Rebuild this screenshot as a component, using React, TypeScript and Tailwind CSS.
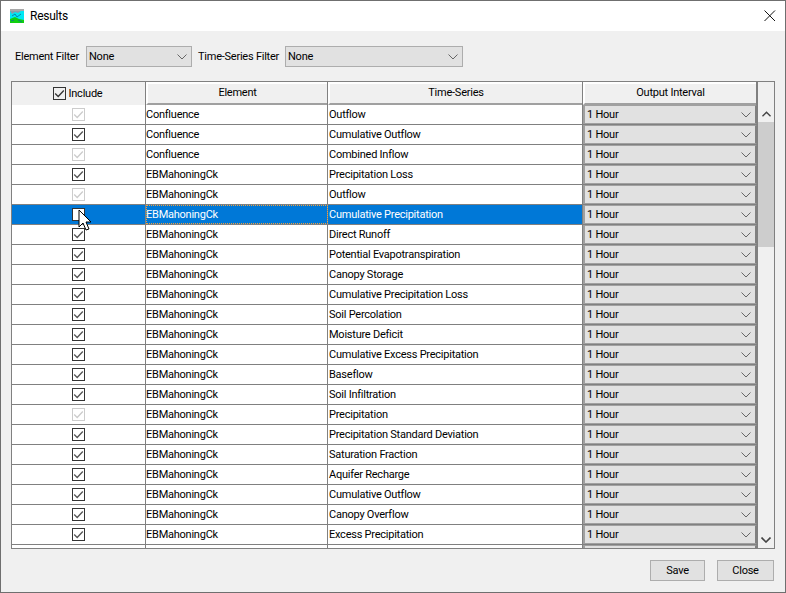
const rows: [string, string, "on" | "off" | "dim"][] = [
  ["Confluence", "Outflow", "dim"],
  ["Confluence", "Cumulative Outflow", "on"],
  ["Confluence", "Combined Inflow", "dim"],
  ["EBMahoningCk", "Precipitation Loss", "on"],
  ["EBMahoningCk", "Outflow", "dim"],
  ["EBMahoningCk", "Cumulative Precipitation", "off"],
  ["EBMahoningCk", "Direct Runoff", "on"],
  ["EBMahoningCk", "Potential Evapotranspiration", "on"],
  ["EBMahoningCk", "Canopy Storage", "on"],
  ["EBMahoningCk", "Cumulative Precipitation Loss", "on"],
  ["EBMahoningCk", "Soil Percolation", "on"],
  ["EBMahoningCk", "Moisture Deficit", "on"],
  ["EBMahoningCk", "Cumulative Excess Precipitation", "on"],
  ["EBMahoningCk", "Baseflow", "on"],
  ["EBMahoningCk", "Soil Infiltration", "on"],
  ["EBMahoningCk", "Precipitation", "dim"],
  ["EBMahoningCk", "Precipitation Standard Deviation", "on"],
  ["EBMahoningCk", "Saturation Fraction", "on"],
  ["EBMahoningCk", "Aquifer Recharge", "on"],
  ["EBMahoningCk", "Cumulative Outflow", "on"],
  ["EBMahoningCk", "Canopy Overflow", "on"],
  ["EBMahoningCk", "Excess Precipitation", "on"],
];

function Chevron({ bold }: { bold?: boolean }) {
  return (
    <svg width="10" height="6" viewBox="0 0 10 6" fill="none" stroke={bold ? "#444" : "#666"} strokeWidth={bold ? 1.6 : 1}>
      <path d="M0.5 0.5 L5 5 L9.5 0.5" />
    </svg>
  );
}

function Check({ state }: { state: "on" | "off" | "dim" }) {
  const dim = state === "dim";
  return (
    <span className={`flex h-[13px] w-[13px] items-center justify-center border ${dim ? "border-[#cccccc]" : "border-[#333333]"} ${state === "off" ? "bg-white" : ""}`}>
      {state !== "off" && (
        <svg width="11" height="11" viewBox="0 0 11 11" fill="none" stroke={dim ? "#cccccc" : "#555555"} strokeWidth="1.3">
          <path d="M1.2 5.5 L4.2 8.5 L9.8 2.5" />
        </svg>
      )}
    </span>
  );
}

function Select({ width, label }: { width: string; label: string }) {
  return (
    <div className={`flex h-[21px] items-center justify-between border border-[#adadad] bg-[#e1e1e1] pl-[2px] pr-[4px] ${width}`}>
      <span>{label}</span>
      <Chevron />
    </div>
  );
}

function HeaderCell({ width, children }: { width: string; children: string }) {
  return (
    <div className={`flex h-[23px] items-center justify-center border-r border-[#808080] ${width}`}>
      <div className="flex h-full w-full items-center justify-center border-t-2 border-l-2 border-b-2 border-t-white border-l-white border-b-[#a0a0a0] bg-[#f0f0f0] pb-[2px]">
        {children}
      </div>
    </div>
  );
}

function Row({ el, series, state, selected }: { el: string; series: string; state: "on" | "off" | "dim"; selected: boolean }) {
  return (
    <div className={`flex h-[20px] border-b border-[#808080] ${selected ? "bg-[#0078d7] text-white" : ""}`}>
      <div className="flex w-[134px] items-center justify-center border-r border-[#808080]">
        <Check state={state} />
      </div>
      <div className={`flex w-[182px] items-center border-r border-[#808080] ${selected ? "outline-1 -outline-offset-1 outline-dotted outline-[#f0a040]" : ""}`}>
        {el}
      </div>
      <div className="flex w-[255px] items-center border-r border-[#808080] pl-[1px]">{series}</div>
      <div className="flex w-[174px] items-center justify-between border-x-2 border-y border-[#a0a0a0] border-r-[#808080] bg-[#e1e1e1] pl-[2px] pr-[4px] text-black">
        <span>1 Hour</span>
        <Chevron />
      </div>
    </div>
  );
}

export default function App() {
  return (
    <div className="flex h-[593px] w-[786px] flex-col overflow-hidden border border-[#6f6f6f] bg-[#f0f0f0] text-[11px] leading-none tracking-[-0.24px] text-black [font-family:Roboto,sans-serif]">
      <div className="flex h-[30px] shrink-0 items-center justify-between bg-white pl-[9px] pr-[9px]">
        <div className="flex items-center gap-[6px]">
          <svg width="14" height="14" viewBox="0 0 14 14">
            <rect width="14" height="14" fill="#00e8f4" />
            <rect width="14" height="2" fill="#a8a8a8" />
            <path d="M0 2 L2 5 L5 3 L8 4 L11 2 Z" fill="#8a9aa8" />
            <path d="M0 10 L5 8 L9 10 L14 11 V14 H0 Z" fill="#10d010" />
            <path d="M2 7 L5 5 L7 8 L11 5 M8 11 L12 13 M1 12 L4 11" stroke="#0a6a9a" strokeWidth="0.8" fill="none" />
          </svg>
          <span className="text-[12px]">Results</span>
        </div>
        <svg width="12" height="12" viewBox="0 0 12 12" stroke="#111" strokeWidth="1" fill="none">
          <path d="M0.5 0.5 L11 11 M11 0.5 L0.5 11" />
        </svg>
      </div>

      <div className="flex min-h-0 flex-1 flex-col px-[10px] pt-[15px]">
        <div className="flex h-[21px] shrink-0 items-center whitespace-nowrap pl-[4px]">
          <span className="w-[71px]">Element Filter</span>
          <Select width="w-[106px]" label="None" />
          <span className="ml-[6px] w-[87px]">Time-Series Filter</span>
          <Select width="w-[178px]" label="None" />
        </div>

        <div className="mt-[14px] flex h-[468px] w-[764px] shrink-0 border border-[#808080] bg-[#f0f0f0]">
          <div className="flex w-[745px] flex-col">
            <div className="flex h-[23px] shrink-0">
              <div className="flex w-[134px] items-center justify-center gap-[3px] border-r border-[#808080] pr-[2px]">
                <span className="flex h-[13px] w-[13px] items-center justify-center border border-[#333333]">
                  <svg width="11" height="11" viewBox="0 0 11 11" fill="none" stroke="#333" strokeWidth="1.3">
                    <path d="M1.2 5.5 L4.2 8.5 L9.8 2.5" />
                  </svg>
                </span>
                <span>Include</span>
              </div>
              <HeaderCell width="w-[182px]">Element</HeaderCell>
              <HeaderCell width="w-[255px]">Time-Series</HeaderCell>
              <HeaderCell width="w-[174px]">Output Interval</HeaderCell>
            </div>
            <div className="relative min-h-0 flex-1 overflow-hidden bg-white">
              {rows.map((r, i) => (
                <Row key={i} el={r[0]} series={r[1]} state={r[2]} selected={i === 5} />
              ))}
              {/* next row only peeks in at the bottom, nothing readable */}
              <div className="flex h-[20px]">
                <div className="w-[134px] border-r border-[#808080]" />
                <div className="w-[182px] border-r border-[#808080]" />
                <div className="w-[255px] border-r border-[#808080]" />
                <div className="w-[174px] border-x-2 border-y border-[#a0a0a0] border-r-[#808080] bg-[#e1e1e1]" />
              </div>
              {/* mouse pointer sits over the selected row */}
              <svg className="absolute left-[66px] top-[104px]" width="14" height="24" viewBox="0 0 14 24">
                <path d="M1 1 L1 18 L5 14 L8 21 L11 20 L8 13 L13 13 Z" fill="white" stroke="black" strokeWidth="1" />
              </svg>
            </div>
          </div>
          <div className="flex w-[17px] flex-col border-l border-[#808080]">
            <div className="h-[23px] shrink-0" />
            <div className="flex h-[17px] shrink-0 items-center justify-center">
              <svg width="9" height="6" viewBox="0 0 10 6" fill="none" stroke="#444" strokeWidth="1.6"><path d="M0.5 5.5 L5 1 L9.5 5.5" /></svg>
            </div>
            <div className="h-[125px] w-[16px] shrink-0 bg-[#cdcdcd]" />
            <div className="flex-1" />
            <div className="flex h-[17px] shrink-0 items-center justify-center">
              <Chevron bold />
            </div>
          </div>
        </div>

        <div className="mt-[11px] flex justify-end gap-[12px] pr-[1px]">
          <button className="h-[21px] w-[55px] border border-[#adadad] bg-[#e1e1e1]">Save</button>
          <button className="h-[21px] w-[57px] border border-[#adadad] bg-[#e1e1e1]">Close</button>
        </div>
      </div>
    </div>
  );
}
